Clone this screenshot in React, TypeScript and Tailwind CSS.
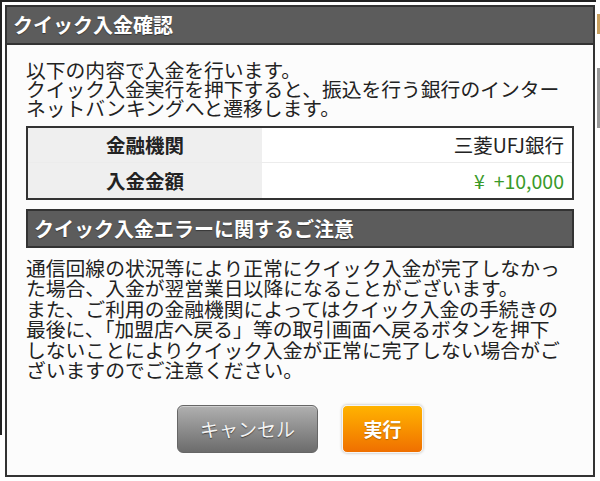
import React from "react";

const jp = { fontFamily: '"Noto Sans CJK JP", "Noto Sans", sans-serif' };

export default function App() {
  return (
    <div
      className="relative w-[600px] h-[481px] bg-white overflow-hidden"
      style={jp}
    >
      {/* background page fragments */}
      <div className="absolute left-0 top-0 w-[2px] h-[435px] bg-[#222]" />
      <div className="absolute left-0 top-0 w-[596px] h-[2px] bg-[#222]" />
      <div className="absolute left-[597px] top-[14px] w-[3px] h-[20px] bg-[#c8a060]" />
      <div className="absolute left-[597px] top-[68px] w-[3px] h-[60px] bg-[#999]" />

      <div className="relative ml-[5px] mt-[5px] w-[590px] h-[472px] border-2 border-[#333] bg-[#fcfcfc] flex flex-col">
        <div className="h-[38px] bg-[#5c5c5c] border-b-2 border-[#333] flex items-center pl-[6px]">
          <span className="text-white font-bold text-[20px] leading-none [text-shadow:0_1px_1px_rgba(0,0,0,0.4)]">
            クイック入金確認
          </span>
        </div>

        <div className="flex flex-col px-[19px] pr-[19px]">
          <div className="mt-[15px] text-[19.8px] leading-[19px] text-[#222] whitespace-nowrap">
            以下の内容で入金を行います。
            <br />
            クイック入金実行を押下すると、振込を行う銀行のインター
            <br />
            ネットバンキングへと遷移します。
          </div>

          <div className="mt-[9px] border-2 border-[#333] bg-white flex flex-col">
            <div className="flex h-[35px] border-b border-[#ececec]">
              <div className="w-[234px] bg-[#efefef] flex items-center justify-center font-bold text-[19.5px] text-[#222]">
                金融機関
              </div>
              <div className="flex-1 flex items-center justify-end pr-[8px] text-[19.5px] text-[#222]">
                三菱UFJ銀行
              </div>
            </div>
            <div className="flex h-[35px]">
              <div className="w-[234px] bg-[#efefef] flex items-center justify-center font-bold text-[19.5px] text-[#222]">
                入金金額
              </div>
              <div className="flex-1 flex items-center justify-end pr-[8px] text-[19.5px] text-[#3a9a2a] whitespace-pre">
                ¥  +10,000
              </div>
            </div>
          </div>

          <div className="mt-[9px] h-[39px] border-2 border-[#333] bg-[#5c5c5c] flex items-center pl-[6px]">
            <span className="text-white font-bold text-[20px] leading-none [text-shadow:0_1px_1px_rgba(0,0,0,0.4)]">
              クイック入金エラーに関するご注意
            </span>
          </div>

          <div className="mt-[10px] text-[19.8px] leading-[20.4px] text-[#222] whitespace-nowrap">
            通信回線の状況等により正常にクイック入金が完了しなかっ
            <br />
            た場合、入金が翌営業日以降になることがございます。
            <br />
            また、ご利用の金融機関によってはクイック入金の手続きの
            <br />
            最後に、「加盟店へ戻る」等の取引画面へ戻るボタンを押下
            <br />
            しないことによりクイック入金が正常に完了しない場合がご
            <br />
            ざいますのでご注意ください。
          </div>

          <div className="mt-[25px] flex justify-center gap-[24px]">
            <button className="w-[141px] h-[48px] rounded-[6px] border border-[#666] bg-linear-to-b from-[#b0b0b0] to-[#6c6c6c] text-[#f4f4f4] text-[19px] [text-shadow:0_1px_1px_rgba(0,0,0,0.5)] shadow-[inset_0_1px_0_rgba(255,255,255,0.4)]">
              キャンセル
            </button>
            <button className="w-[81px] h-[48px] rounded-[5px] bg-linear-to-b from-[#ffb300] to-[#ef6f00] text-white font-bold text-[19px] [text-shadow:0_1px_1px_rgba(0,0,0,0.25)] shadow-[0_0_3px_rgba(0,0,0,0.3)] border border-[#f5f5f5]">
              実行
            </button>
          </div>
        </div>
      </div>
    </div>
  );
}
